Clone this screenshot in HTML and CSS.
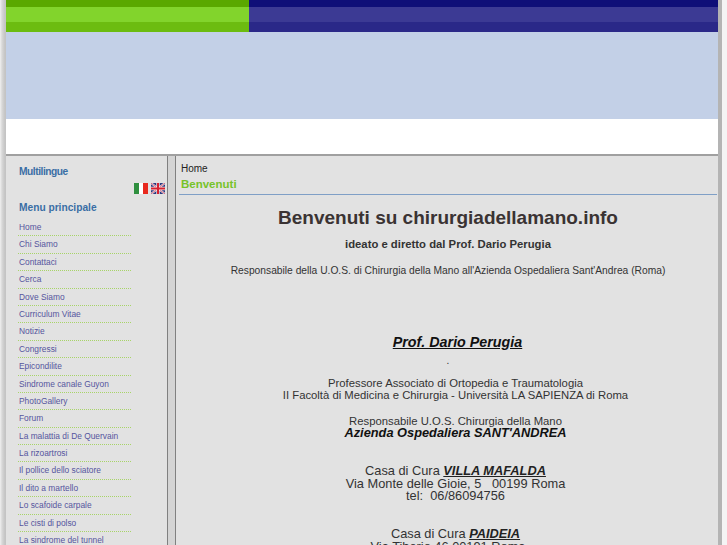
FILE: index.html
```html
<!DOCTYPE html>
<html lang="it">
<head>
    <meta charset="UTF-8">
    <meta name="viewport" content="width=device-width, initial-scale=1.0">
    <title>Benvenuti su chirurgiadellamano.info</title>
    <link rel="stylesheet" href="styles.css">
</head>
<body>
<div class="page">
    <div class="top-bands">
        <div class="band-green"></div>
        <div class="band-blue"></div>
    </div>
    <div class="banner"></div>
    <div class="white-strip"></div>

    <div class="columns">
        <div class="sidebar">
            <h3 class="side-title lang-title">Multilingue</h3>
            <div class="flags">
                <svg width="14" height="11" viewBox="0 0 14 11">
                    <rect width="5" height="11" fill="#2f8f3f"/>
                    <rect x="5" width="4" height="11" fill="#fff"/>
                    <rect x="9" width="5" height="11" fill="#e8291f"/>
                </svg>
                <svg width="14" height="11" viewBox="0 0 14 11">
                    <rect width="14" height="11" fill="#2b3a80"/>
                    <path d="M0 0L14 11M14 0L0 11" stroke="#e8e0e8" stroke-width="2"/>
                    <path d="M0 0L14 11M14 0L0 11" stroke="#d0304a" stroke-width="0.7"/>
                    <path d="M7 0V11M0 5.5H14" stroke="#f2e8ea" stroke-width="3.4"/>
                    <path d="M7 0V11M0 5.5H14" stroke="#d8202f" stroke-width="2"/>
                </svg>
            </div>
            <h3 class="side-title menu-title">Menu principale</h3>
            <ul class="menu">
                <li>Home</li>
                <li>Chi Siamo</li>
                <li>Contattaci</li>
                <li>Cerca</li>
                <li>Dove Siamo</li>
                <li>Curriculum Vitae</li>
                <li>Notizie</li>
                <li>Congressi</li>
                <li>Epicondilite</li>
                <li>Sindrome canale Guyon</li>
                <li>PhotoGallery</li>
                <li>Forum</li>
                <li>La malattia di De Quervain</li>
                <li>La rizoartrosi</li>
                <li>Il pollice dello sciatore</li>
                <li>Il dito a martello</li>
                <li>Lo scafoide carpale</li>
                <li>Le cisti di polso</li>
                <li>La sindrome del tunnel</li>
            </ul>
        </div>
        <div class="gutter"></div>
        <div class="main">
            <div class="crumb">Home</div>
            <h2 class="page-title">Benvenuti</h2>
            <div class="article">
                <h1>Benvenuti su chirurgiadellamano.info</h1>
                <p class="sub">ideato e diretto dal Prof. Dario Perugia</p>
                <p class="resp">Responsabile della U.O.S. di Chirurgia della Mano all'Azienda Ospedaliera Sant'Andrea (Roma)</p>
                <p class="prof"><b><i><u>Prof. Dario Perugia</u></i></b></p>
                <p class="dot">.</p>
                <p class="small shifted">Professore Associato di Ortopedia e Traumatologia<br>II Facoltà di Medicina e Chirurgia - Università LA SAPIENZA di Roma</p>
                <p class="small uos shifted">Responsabile U.O.S. Chirurgia della Mano<br><b class="big"><i>Azienda Ospedaliera SANT'ANDREA</i></b></p>
                <p class="clinic shifted">Casa di Cura <b><i><u>VILLA MAFALDA</u></i></b><br>Via Monte delle Gioie, 5 &nbsp; 00199 Roma<br>tel:&nbsp; 06/86094756</p>
                <p class="clinic second shifted">Casa di Cura <b><i><u>PAIDEIA</u></i></b></p>
                <p class="clinic last">Via Tiberio 46 00191 Roma</p>
            </div>
        </div>
    </div>
</div>
</body>
</html>
```

FILE: styles.css
```css
html, body {
    margin: 0;
    padding: 0;
    height: 100%;
    overflow: hidden;
}
body {
    font-family: "Liberation Sans", Arial, sans-serif;
    background: linear-gradient(to right, #f0f0f0 0, #d8d8d8 2px, #c4c4c4 5px, #c4c4c4 6px, transparent 6px),
                linear-gradient(to left, #f4f4f4 0, #f4f4f4 5px, #b4b4b4 5px, #b4b4b4 9px, #f4f4f4 9px);
}
.page {
    margin: 0 9px 0 6px;
    height: 100%;
    overflow: hidden;
}
.top-bands {
    display: flex;
    height: 32px;
}
.band-green {
    width: 243px;
    background: linear-gradient(to bottom, #5aa800 0, #5aa800 7px, #82d42c 7px, #82d42c 22px, #6cbc10 22px);
}
.band-blue {
    flex: 1;
    background: linear-gradient(to bottom, #0f0f78 0, #0f0f78 7px, #3c3a94 7px, #3c3a94 22px, #2a2888 22px);
}
.banner {
    height: 87px;
    background-color: #c3d0e7;
}
.white-strip {
    height: 35px;
    background-color: #fff;
    border-bottom: 2px solid #a0a0a0;
}
.columns {
    display: flex;
    align-items: stretch;
    min-height: 600px;
    background-color: #e2e2e2;
}
.sidebar {
    width: 148px;
    border-right: 1px solid #808080;
    padding: 10px 0 0 13px;
}
.gutter {
    width: 7px;
    background-color: #d4d4d4;
    border-right: 1px solid #808080;
}
.side-title {
    margin: 0;
    font-size: 10.2px;
    line-height: 12px;
    font-weight: bold;
    color: #3a6ea5;
}
.lang-title {
    letter-spacing: -0.45px;
}
.flags {
    display: flex;
    justify-content: flex-end;
    gap: 3px;
    margin-top: 5px;
    padding-right: 2px;
    height: 11px;
}
.menu-title {
    margin-top: 8px;
}
.menu {
    list-style: none;
    margin: 5px 0 0 -1px;
    padding: 0;
    width: 113px;
}
.menu li {
    font-size: 8.4px;
    line-height: 10px;
    height: 13.4px;
    padding: 3px 0 0 1px;
    color: #55559e;
    border-bottom: 1px dotted #a8d468;
    white-space: nowrap;
}
.main {
    flex: 1;
    padding: 7px 1px 0 3px;
    min-width: 0;
}
.crumb {
    font-size: 10px;
    line-height: 12px;
    color: #222;
    padding-left: 2px;
}
.page-title {
    margin: 2px 0 0;
    padding: 0 0 3px 2px;
    font-size: 11.5px;
    line-height: 14px;
    font-weight: bold;
    color: #77c22a;
    border-bottom: 1px solid #7f9fc6;
}
.article {
    text-align: center;
    color: #333;
}
.article h1 {
    margin: 10px 0 0;
    font-size: 19px;
    line-height: 26px;
    font-weight: bold;
    color: #3a3333;
}
.sub {
    margin: 7px 0 0;
    font-size: 11.3px;
    line-height: 13px;
    font-weight: bold;
}
.resp {
    margin: 13px 0 0;
    font-size: 10.25px;
    line-height: 13px;
}
.prof {
    margin: 56px 0 0;
    padding-left: 19px;
    font-size: 14.3px;
    line-height: 18px;
    color: #111;
}
.dot {
    margin: 4px 0 0;
    font-size: 10px;
    line-height: 12px;
}
.shifted {
    padding-left: 15px;
}
.small {
    margin: 10px 0 0;
    font-size: 11.3px;
    line-height: 12.3px;
}
.uos {
    margin-top: 13px;
}
.big {
    font-size: 12.8px;
    color: #111;
}
.clinic {
    margin: 26px 0 0;
    font-size: 12.8px;
    line-height: 12.6px;
}
.second {
    margin-top: 25px;
}
.last {
    margin-top: 0.4px;
}
.clinic b {
    color: #222;
}
```
